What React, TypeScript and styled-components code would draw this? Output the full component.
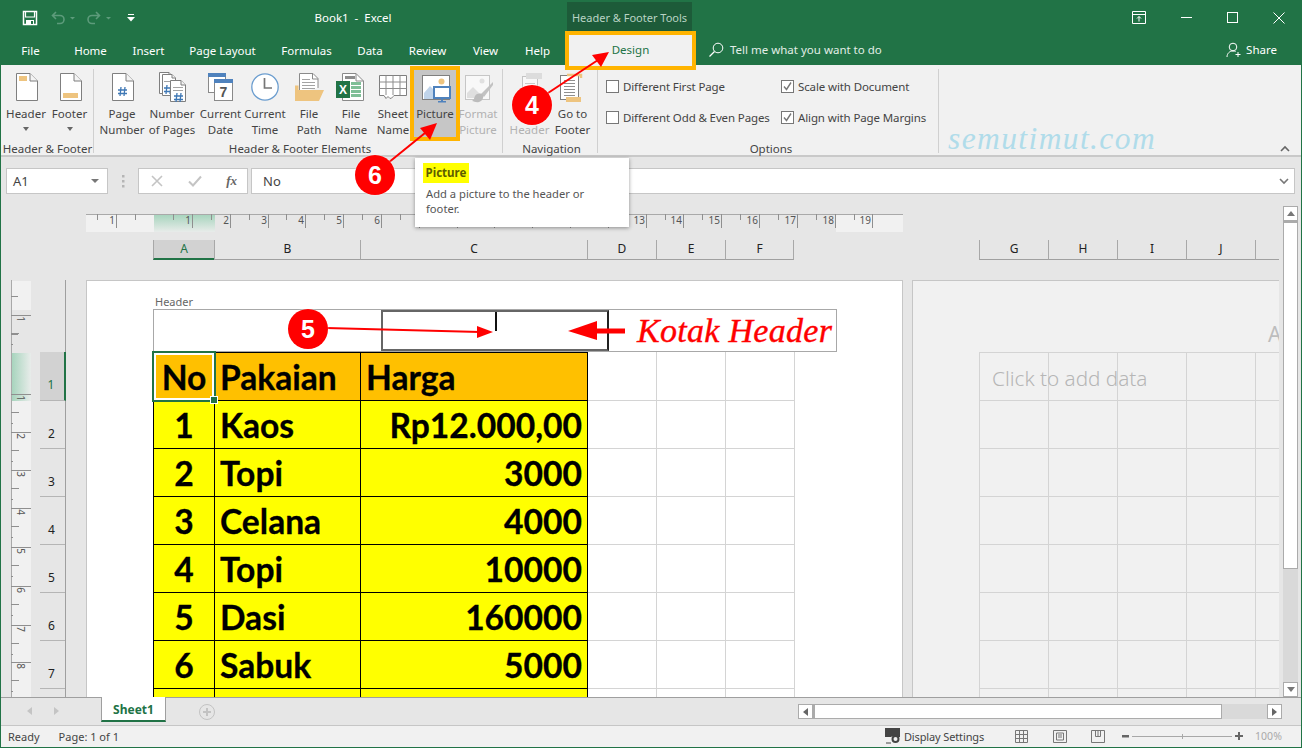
import React from "react";
import styled, { createGlobalStyle } from "styled-components";

const GREEN = "#217346";
const UI = `"Noto Sans", "Open Sans", sans-serif`;

const Global = createGlobalStyle`
  html, body { margin: 0; padding: 0; background: #e6e6e6; }
  * { box-sizing: border-box; }
`;

const Frame = styled.div`
  position: relative; width: 1302px; height: 748px; overflow: hidden;
  display: flex; flex-direction: column; background: #e6e6e6;
  border: 1px solid ${GREEN}; border-top: 0;
  font-family: ${UI}; font-size: 11.5px; color: #444;
`;

/* Title bar */
const TitleBar = styled.div`
  height: 35px; flex: none; display: flex; align-items: center; background: ${GREEN}; color: #fff;
`;
const Qat = styled.div`
  width: 250px; display: flex; align-items: center; padding-left: 21px;
`;
const QatSlot = styled.span<{ $w: number }>`
  display: flex; width: ${(p) => p.$w}px;
`;
const DocTitle = styled.div`
  width: 196px; text-align: center; white-space: pre; font-size: 11.5px; padding: 0 0 1px 8px;
`;
const ToolTab = styled.div`
  align-self: flex-start; margin: 2px 0 0 120px; width: 125px; height: 33px; background: #1d5b39;
  color: #b9d3c4; text-align: center; line-height: 32px; font-size: 11px;
`;
const WinControls = styled.div`
  margin-left: auto; display: flex; align-items: center; width: 169px; padding-right: 16px;
  justify-content: space-between;
`;

/* Tabs */
const TabBar = styled.div`
  height: 30px; flex: none; display: flex; align-items: center; background: ${GREEN}; color: #fff;
`;
const Tab = styled.div<{ $w: number }>`
  width: ${(p) => p.$w}px; text-align: center; line-height: 29px; white-space: nowrap;
`;
const DesignTab = styled.div`
  margin-left: 5px; width: 125px; height: 30px; line-height: 29px; background: #f1f1f1;
  color: ${GREEN}; text-align: center;
`;
const TellMe = styled.div`
  margin-left: 15px; display: flex; align-items: center; gap: 6px; color: #e2eee7; padding-bottom: 1px;
`;
const ShareBox = styled.div`
  margin-left: auto; margin-right: 24px; display: flex; align-items: center; gap: 4px; padding-bottom: 1px;
`;

/* Ribbon */
const Ribbon = styled.div`
  height: 92px; flex: none; display: flex; background: #f1f1f1; border-bottom: 2px solid #c9c9c9;
`;
const Group = styled.div<{ $w: number; $pad: number }>`
  width: ${(p) => p.$w}px; height: 84px; flex: none; padding-left: ${(p) => p.$pad}px;
  display: flex; flex-direction: column; margin-top: 4px;
  border-right: 1px solid #d0d0d0;
`;
const Buttons = styled.div`
  height: 69px; flex: none; display: flex;
`;
const GroupLabel = styled.div`
  margin-top: 4px; height: 14px; flex: none; line-height: 14px; text-align: center; font-size: 11.5px;
  margin-left: -2px; white-space: nowrap; color: #444;
`;
const RibbonBtn = styled.div<{ $w: number; $on?: boolean; $dim?: boolean }>`
  width: ${(p) => p.$w}px; flex: none; display: flex; flex-direction: column; align-items: center;
  padding-top: 3px; background: ${(p) => (p.$on ? "#c6c6c6" : "transparent")};
  color: ${(p) => (p.$dim ? "#b1b1b1" : "#444")};
  svg { flex: none; }
`;
const BtnText = styled.div`
  margin-top: 2px; text-align: center; line-height: 16px; white-space: pre; font-size: 11.5px;
`;
const Caret = styled.div`
  margin-top: 5px; width: 0; height: 0; border: 3px solid transparent; border-top: 4px solid #666; border-bottom: 0;
`;
const OptGrid = styled.div`
  display: grid; grid-template-columns: 175px 1fr; grid-auto-rows: 31px; padding-top: 2px; height: 69px; flex: none;
`;
const Opt = styled.div`
  display: flex; align-items: center; gap: 4px; white-space: nowrap; font-size: 11.5px; letter-spacing: -0.12px;
`;
const Box = styled.span`
  width: 13px; height: 13px; background: #fff; border: 1px solid #777; flex: none; display: flex;
`;
const Brand = styled.div`
  flex: 1; padding: 56px 0 0 9px; font: italic 31.5px "Liberation Serif", serif; letter-spacing: 1.4px; color: #b0dcea;
  white-space: nowrap; line-height: 36px;
`;
const Collapse = styled.div`
  align-self: flex-end; margin: 0 11px 3px 0; display: flex;
`;

/* Formula row */
const FormulaRow = styled.div`
  height: 48px; flex: none; display: flex; align-items: flex-start; padding: 11px 6px 0 5px;
`;
const NameBox = styled.div`
  width: 102px; height: 26px; background: #fff; border: 1px solid #c6c6c6; display: flex; align-items: center;
  justify-content: space-between; padding: 0 8px 0 6px; font-size: 13px; color: #444;
`;
const DownTri = styled.span`
  width: 0; height: 0; border: 4px solid transparent; border-top: 4px solid #777; border-bottom: 0; border-left-width: 4px;
`;
const Grip = styled.div`
  width: 30px; height: 26px; display: flex; align-items: center; justify-content: center; color: #aaa;
`;
const FxBox = styled.div`
  width: 110px; height: 26px; background: #fff; border: 1px solid #c6c6c6; display: flex; align-items: center;
  justify-content: space-between; padding: 0 10px 0 12px;
`;
const FxText = styled.span`
  font: italic bold 13px "Liberation Serif", serif; color: #666;
`;
const FormulaInput = styled.div`
  margin-left: 3px; flex: 1; height: 26px; background: #fff; border: 1px solid #c6c6c6; display: flex;
  align-items: center; justify-content: space-between; padding: 0 5px 0 11px; font-size: 13px; color: #444;
`;

/* Worksheet */
const Workspace = styled.div`
  flex: none; height: 493px; display: flex; border-bottom: 1px solid #9f9f9f;
`;
const SheetPane = styled.div`
  width: 1278px; flex: none; overflow: hidden; position: relative; padding-top: 9px;
`;
const RulerRow = styled.div`
  margin-left: 85px; height: 18px; display: flex;
`;
const ColRow = styled.div`
  margin: 8px 0 0 152px; height: 20px; display: flex; width: 1126px;
`;
const ColGroup = styled.div<{ $mr?: number }>`
  display: flex; flex: none; margin-right: ${(p) => p.$mr ?? 0}px;
`;
const ColHead = styled.div<{ $w: number; $sel?: boolean }>`
  width: ${(p) => p.$w}px; flex: none; height: 20px; text-align: center; line-height: 18px; font-size: 12px; color: ${(p) => (p.$sel ? GREEN : "#222")};
  background: ${(p) => (p.$sel ? "#d2d2d2" : "transparent")};
  border-bottom: ${(p) => (p.$sel ? `2px solid ${GREEN}` : "1px solid #a0a0a0")};
  border-left: 1px solid #a8a8a8;
  &:last-child { border-right: 1px solid #a8a8a8; }
`;
const BodyRow = styled.div`
  margin-top: 20px; display: flex; height: 418px;
`;
const VRulerSlot = styled.div`
  margin-left: 10px; width: 20px; flex: none; display: flex;
`;
const RowHeads = styled.div`
  margin-left: 9px; width: 26px; flex: none; padding-top: 72px; border-right: 1px solid #9f9f9f;
`;
const RowHead = styled.div<{ $sel?: boolean }>`
  height: ${(p) => (p.$sel ? 49 : 48)}px; text-align: center; padding-top: 24px; line-height: 18px; padding-right: 2px; font-size: 12px; color: ${(p) => (p.$sel ? GREEN : "#222")};
  border-bottom: 1px solid #b5b5b5;
  background: ${(p) => (p.$sel ? "#d2d2d2" : "transparent")};
  margin-right: ${(p) => (p.$sel ? "-1px" : 0)};
  border-right: ${(p) => (p.$sel ? `2px solid ${GREEN}` : 0)};
`;
const Page = styled.div<{ $gray?: boolean; $w: number; $ml: number }>`
  flex: none; width: ${(p) => p.$w}px; margin-left: ${(p) => p.$ml}px; height: 418px; background: ${(p) => (p.$gray ? "#f1f1f1" : "#fff")};
  border: 1px solid #c6c6c6; border-bottom: 0; overflow: hidden; position: relative;
`;
const HeaderTag = styled.div`
  margin: 14px 0 0 68px; height: 14px; line-height: 14px; font-size: 11px; color: #666;
`;
const HeaderBox = styled.div`
  margin-left: 66px; width: 684px; height: 43px; display: flex; border: 1px solid #a8a8a8;
`;
const HeadSection = styled.div<{ $w: number }>`
  width: ${(p) => p.$w}px; flex: none;
`;
const HeadCenter = styled.div`
  width: 228px; flex: none; height: 41px; border: 2px solid #666; border-right-color: #222; padding-left: 112px;
`;
const Cursor = styled.div`
  width: 1.5px; height: 19px; background: #111;
`;
const KotakText = styled.div`
  padding: 0 0 0 28px; font: italic 34px "Liberation Serif", serif; line-height: 41px; color: #f00; white-space: nowrap;
  letter-spacing: 0.3px; -webkit-text-stroke: 0.4px #f00;
`;
const TableGrid = styled.div`
  margin-left: 66px; display: grid; grid-template-columns: 62px 146px 227px 69px 69px 69px;
  grid-template-rows: 49px; grid-auto-rows: 48px;
  font: bold 33.6px Lato, "Noto Sans", sans-serif; -webkit-text-stroke: 0.3px #000; color: #000; width: max-content;
`;
const Cell = styled.div<{ $bg?: string; $align?: string; $line?: string; $top?: boolean; $left?: boolean }>`
  background: ${(p) => p.$bg ?? "transparent"};
  text-align: ${(p) => p.$align ?? "left"};
  padding: 0 5px 0 5px; line-height: 48px; white-space: nowrap; overflow: hidden;
  border-right: 1px solid ${(p) => p.$line ?? "#000"};
  border-bottom: 1px solid ${(p) => p.$line ?? "#000"};
  border-top: ${(p) => (p.$top ? "1px solid #000" : 0)};
  border-left: ${(p) => (p.$left ? "1px solid #000" : 0)};
`;
const FirstCell = styled(Cell)`
  outline: 2px solid ${GREEN}; outline-offset: -1px; box-shadow: inset 0 0 0 2px #fff; position: relative; z-index: 1; padding: 0;
  overflow: visible; border-color: transparent;
  &:after { content: ""; position: absolute; right: -4px; bottom: -4px; width: 6px; height: 6px; background: ${GREEN}; border: 1px solid #fff; }
`;
const Grid2 = styled.div`
  margin: 0 0 0 66px; display: grid; grid-template-columns: repeat(5, 69px); grid-auto-rows: 48px; position: relative;
  border-top: 1px solid #d4d4d4; border-left: 1px solid #d4d4d4; width: max-content;
`;
const Cell2 = styled.div`
  border-right: 1px solid #d4d4d4; border-bottom: 1px solid #d4d4d4;
`;
const AddHeader = styled.div`
  margin: 36px 0 0 355px; height: 35px; font-size: 21px; color: #bdbdbd; line-height: 34px; white-space: nowrap;
`;
const AddData = styled.div`
  position: absolute; left: 12px; top: 11px; font-size: 20.7px; font-weight: 300; color: #b6b6b6; line-height: 28px; white-space: nowrap;
`;

/* Vertical scrollbar */
const VScroll = styled.div`
  margin: 1px 0 0 4px; width: 15px; display: flex; flex-direction: column; background: #d9d9d9;
`;
const ScrollBtn = styled.div`
  flex: none; height: 15px; width: 15px; background: #fff; border: 1px solid #ababab; display: flex; align-items: center; justify-content: center;
`;
const VThumb = styled.div`
  height: 348px; flex: none; background: #fff; border: 1px solid #ababab; border-top-width: 2px;
`;
const VTrack = styled.div`
  flex: 1;
`;

/* Sheet tabs */
const SheetBar = styled.div`
  height: 28px; flex: none; display: flex; align-items: flex-start; border-bottom: 1px solid #c6c6c6;
`;
const SheetNav = styled.div`
  width: 100px; display: flex; padding: 9px 0 0 26px; gap: 22px; flex: none; height: 25px;
`;
const SheetTab = styled.div`
  margin-top: -1px; width: 65px; height: 25px; flex: none; background: #fff; border: 1px solid #9f9f9f; border-top: 0;
  border-bottom: 2px solid ${GREEN}; color: ${GREEN}; font-weight: 700; font-size: 12px; line-height: 26px; text-align: center;
`;
const AddSheet = styled.div`
  margin: 6px 0 0 33px; width: 16px; height: 16px; border: 1.5px solid #c3c3c3; border-radius: 50%; display: flex; align-items: center; justify-content: center; flex: none;
`;
const HScroll = styled.div`
  margin: 6px 19px 0 auto; width: 484px; height: 15px; display: flex; background: #d9d9d9;
`;
const HBtn = styled.div<{ $gap?: boolean }>`
  width: 15px; height: 15px; flex: none; background: #fff; border: 1px solid #ababab; display: flex; align-items: center; justify-content: center;
  margin-left: ${(p) => (p.$gap ? "auto" : 0)};
`;
const HThumb = styled.div`
  width: 409px; height: 15px; background: #fff; border: 1px solid #ababab; border-left-width: 2px;
`;

/* Status */
const StatusBar = styled.div`
  height: 21px; flex: none; display: flex; align-items: center; background: #f1f1f1; padding: 0 0 1px 7px; font-size: 11px; color: #444;
`;
const StatusItem = styled.span<{ $ml?: number }>`
  margin-left: ${(p) => p.$ml ?? 0}px; display: flex; align-items: center; gap: 3px; white-space: nowrap; flex: none;
`;
const DisplayLabel = styled.span`
  letter-spacing: -0.13px;
`;
const ZoomTrack = styled.div`
  width: 100px; height: 1px; background: #a8a8a8; position: relative; flex: none;
  &:after { content: ""; position: absolute; left: 50px; top: -2px; width: 1px; height: 5px; background: #a8a8a8; }
`;
const ZoomPct = styled.span`
  margin-left: 12px; color: #aaa; font-size: 10.5px;
`;

/* Overlays */
const Overlay = styled.svg`
  position: absolute; left: -1px; top: 0; pointer-events: none; z-index: 5;
`;
const Bubble = styled.div<{ $x: number; $y: number; $r?: number }>`
  position: absolute; z-index: 6; left: ${(p) => p.$x - (p.$r ?? 20) - 1}px; top: ${(p) => p.$y - (p.$r ?? 20)}px;
  width: ${(p) => (p.$r ?? 20) * 2}px; height: ${(p) => (p.$r ?? 20) * 2}px; border-radius: 50%; background: #f00; color: #fff;
  font: bold 25px "Liberation Sans", sans-serif; text-align: center; line-height: ${(p) => (p.$r ?? 20) * 2}px;
  box-shadow: 0 0 2px rgba(255,255,255,.8);
`;
const Highlight = styled.div<{ $x: number; $y: number; $w: number; $h: number }>`
  position: absolute; z-index: 4; left: ${(p) => p.$x - 1}px; top: ${(p) => p.$y}px; width: ${(p) => p.$w}px; height: ${(p) => p.$h}px;
  border: 4px solid #ffb400; pointer-events: none;
`;
const Tip = styled.div`
  position: absolute; z-index: 4; left: 414px; top: 158px; width: 214px; height: 69px; background: #fff;
  box-shadow: 0 1px 4px rgba(0,0,0,.4); padding: 5px 8px; font-size: 11.2px; color: #555;
`;
const TipTitle = styled.div`
  width: 46px; height: 20px; background: #ff0; font-weight: 700; color: #5d5d00; line-height: 19px; font-size: 11.5px; text-align: center; white-space: nowrap;
`;
const TipBody = styled.div`
  margin-top: 3px; padding-left: 3px; line-height: 15px; width: 175px;
`;

/* Icons */
const Doc = ({ x = 6, y = 1, w = 22, h = 28, f = 8, c = "#7f7f7f", fill = "#fff" }: any) => (
  <>
    <path d={`M${x + 0.5} ${y + 0.5}H${x + w - f}L${x + w - 0.5} ${y + f}V${y + h - 0.5}H${x + 0.5}Z`} fill={fill} stroke={c} />
    <path d={`M${x + w - f} ${y + 0.5}V${y + f}H${x + w - 0.5}`} fill="#f4f4f4" stroke={c} />
  </>
);
const Ico = ({ children, w = 32, h = 32 }: any) => (
  <svg width={w} height={h} viewBox={`0 0 ${w} ${h}`} aria-hidden="true">{children}</svg>
);
const Hash = ({ x, y, s = 1 }: any) => (
  <path transform={`translate(${x} ${y}) scale(${s})`} d="M3 0 2 9M7 0 6 9M0 3H9M0 6.5H9" stroke="#3f78b5" strokeWidth="1.3" fill="none" />
);
const Lines = ({ x, y, w, n, gap = 3, c = "#a3a3a3" }: any) => (
  <path d={Array.from({ length: n }, (_, i) => `M${x} ${y + i * gap + 0.5}h${w}`).join("")} stroke={c} fill="none" />
);

const HeaderIco = () => <Ico><Doc /><rect x="9" y="4" width="8" height="5" fill="#eec47f" /></Ico>;
const FooterIco = () => <Ico><Doc /><rect x="9" y="21" width="15" height="5" fill="#eec47f" /></Ico>;
const PageNumIco = () => <Ico><Doc /><Hash x={12} y={15} /></Ico>;
const NumPagesIco = () => (
  <Ico>
    <Doc x={3} y={0} w={14} h={22} f={4} />
    <Doc x={6} y={2} w={14} h={22} f={4} />
    <Lines x={8} y={9} w={9} n={1} />
    <Hash x={8} y={13} />
    <Doc x={14} y={8} w={16} h={22} f={5} />
    <Lines x={17} y={15} w={10} n={2} />
    <Hash x={18} y={21} />
  </Ico>
);
const DateIco = () => (
  <Ico>
    <rect x="3.5" y="1.5" width="17" height="19" fill="#fff" stroke="#8a8a8a" />
    <rect x="3" y="1" width="18" height="4" fill="#4f82bd" />
    <rect x="9.5" y="7.5" width="18" height="21" fill="#fff" stroke="#8a8a8a" />
    <rect x="9" y="7" width="19" height="4" fill="#4f82bd" />
    <text x="18.5" y="25" textAnchor="middle" fontFamily="Liberation Sans" fontWeight="700" fontSize="14" fill="#555">7</text>
  </Ico>
);
const TimeIco = () => (
  <Ico>
    <circle cx="16" cy="15" r="13.2" fill="#fff" stroke="#6b9dcf" strokeWidth="1.3" />
    <path d="M15.5 6V16H23" fill="none" stroke="#767676" strokeWidth="1.7" />
  </Ico>
);
const PathIco = () => (
  <Ico>
    <path d="M6.5 20V1.5H20L25 6.5V16" fill="#fff" stroke="#8a8a8a" />
    <path d="M19.5 1.5V7H25" fill="none" stroke="#8a8a8a" />
    <Lines x={9} y={7} w={8} n={1} />
    <Lines x={9} y={10} w={13} n={3} />
    <path d="M2 13.5H5.5V18H31L26 29H2Z" fill="#eec47f" />
  </Ico>
);
const NameIco = () => (
  <Ico>
    <path d="M7.5 1.5H21L28.5 9V28.5H7.5Z" fill="#fff" stroke="#8a8a8a" />
    <path d="M21 1.5V9H28.5" fill="none" stroke="#8a8a8a" />
    <rect x="10" y="4" width="10" height="3" fill="#8d8d8d" />
    <path d="M16 10h10v3h-10zM16 14h10v3h-10zM16 18h10v3h-10zM16 22h10v3h-10z" fill="#7fbf97" />
    <rect x="1" y="9" width="14" height="17" fill={GREEN} />
    <text x="8" y="22" textAnchor="middle" fontFamily="Liberation Sans" fontWeight="700" fontSize="12" fill="#fff">X</text>
  </Ico>
);
const SheetIco = () => (
  <Ico>
    <path d="M2.5 3.5H29.5V23.5H17C16 25 15 26 13 26.5L11 24.5L9 26.5L7 23.5H2.5Z" fill="#fff" stroke="#7f7f7f" />
    <path d="M2.5 10H29.5M2.5 16.5H29.5M9 3.5V23M16 3.5V23M23 3.5V23" stroke="#8d8d8d" fill="none" />
  </Ico>
);
const PictureIco = () => (
  <Ico>
    <rect x="3.5" y="3.5" width="27" height="24" fill="#fff" stroke="#7f7f7f" />
    <circle cx="22.5" cy="9.5" r="3" fill="#eec47f" />
    <path d="M5 27V21L11 14L20 23V27Z" fill="#c0d4ea" />
    <rect x="15" y="15" width="16" height="11" fill="#fff" stroke="#4f82bd" strokeWidth="2" />
    <path d="M22 27h2v2h3v1.4h-8V29h3z" fill="#4f82bd" />
  </Ico>
);
const FormatPicIco = () => (
  <Ico>
    <rect x="3.5" y="3.5" width="24" height="24" fill="#f8f8f8" stroke="#c6c6c6" />
    <circle cx="20" cy="9" r="2.5" fill="#e0e0e0" />
    <path d="M5 26V21L11 15L19 23V26Z" fill="#dfdfdf" />
    <path d="M31 10 19 22l3 3 9-12z" fill="#c2c2c2" />
    <path d="M13 24c2-3 6-3 8-1 1 3-1 6-4 7-3 1-5-1-7-1 2-1 2-3 3-5z" fill="#bcbcbc" />
  </Ico>
);
const NavHeaderIco = () => (
  <Ico>
    <rect x="8.5" y="4.5" width="15" height="24" fill="#f8f8f8" stroke="#c4c4c4" />
    <rect x="12" y="1" width="16" height="6" fill="#dcdcdc" />
    <Lines x={11} y={11} w={10} n={5} gap={3} c="#c9c9c9" />
  </Ico>
);
const NavFooterIco = () => (
  <Ico>
    <rect x="3.5" y="3.5" width="18" height="24" fill="#fff" stroke="#7f7f7f" />
    <path d="M10 3h14v3" fill="none" stroke="#eec47f" strokeWidth="2.4" />
    <Lines x={7} y={8} w={11} n={6} gap={3} c="#8f8f8f" />
    <rect x="9" y="25" width="15" height="5" fill="#eec47f" />
  </Ico>
);
const Check = () => (
  <svg width="11" height="11" viewBox="0 0 11 11"><path d="M2 5.5 4.5 8.5 9 1.5" fill="none" stroke="#777" strokeWidth="1.4" /></svg>
);

const Ruler = () => {
  const step = 37.8;
  const ticks: React.ReactNode[] = [];
  const major = (x: number, label: number | null, key: string) => (
    <g key={key}>
      <path d={`M${x + 0.5} 0V14`} stroke="#8f8f8f" />
      {label !== null && <text x={x - 1} y={10} fontSize="10" textAnchor="end" fill="#555" fontFamily="Noto Sans">{label}</text>}
    </g>
  );
  ticks.push(major(30, 1, "l"));
  for (let n = 1; n <= 19; n++) {
    const x = 106 + (n - 1) * step;
    /* numbers 7 to 12 lie behind the tooltip */
    ticks.push(major(Math.round(x), n >= 7 && n <= 12 ? null : n, `m${n}`));
    ticks.push(<path key={`h${n}`} d={`M${Math.round(x - step / 2) + 0.5} 0V6`} stroke="#8f8f8f" />);
  }
  return (
    <svg width="817" height="18" viewBox="0 0 817 18" aria-hidden="true">
      <defs>
        <linearGradient id="rg" x1="0" y1="0" x2="0" y2="1">
          <stop offset="0" stopColor="#a4d3bb" />
          <stop offset="1" stopColor="#e8ecea" />
        </linearGradient>
      </defs>
      <rect x="0" y="0" width="68" height="18" fill="#f1f1f1" />
      <rect x="68" y="0" width="61" height="18" fill="url(#rg)" />
      <rect x="750" y="0" width="67" height="18" fill="#f1f1f1" />
      <path d="M0 .5H817" stroke="#a9a9a9" />
      <path d="M11.5 0V6M49.5 0V6" stroke="#8f8f8f" />
      {ticks}
    </svg>
  );
};

const VRuler = () => {
  const marks: [number, number][] = [[35, 1], [113.5, 1], [152, 2], [190, 3], [228, 4], [267, 5], [306, 6], [345, 7], [382, 8]];
  return (
    <svg width="20" height="418" viewBox="0 0 20 418" aria-hidden="true">
      <defs>
        <linearGradient id="vg" x1="0" y1="0" x2="1" y2="0">
          <stop offset="0" stopColor="#a4d3bb" />
          <stop offset="1" stopColor="#e8ecea" />
        </linearGradient>
      </defs>
      <rect x="0" y="1" width="20" height="29" fill="#f1f1f1" />
      <rect x="0" y="73" width="20" height="48" fill="url(#vg)" />
      <rect x="0" y="121" width="20" height="297" fill="#f1f1f1" />
      <path d="M.5 0V418" stroke="#a9a9a9" />
      <path d="M0 16.5H7M0 54.5H7" stroke="#8f8f8f" />
      {marks.map(([y, n]) => {
        const ry = Math.round(y);
        return (
          <g key={`${y}`}>
            <path d={`M0 ${ry + 0.5}H20`} stroke="#8f8f8f" />
            <path d={`M0 ${ry + 18.5}H8M0 ${ry + 29.5}H2`} stroke="#8f8f8f" />
            <text transform={`translate(6 ${ry + 4}) rotate(90)`} fontSize="10" textAnchor="middle" fill="#555" fontFamily="Noto Sans">{n}</text>
          </g>
        );
      })}
    </svg>
  );
};

const rows: [string, string, string][] = [
  ["1", "Kaos", "Rp12.000,00"],
  ["2", "Topi", "3000"],
  ["3", "Celana", "4000"],
  ["4", "Topi", "10000"],
  ["5", "Dasi", "160000"],
  ["6", "Sabuk", "5000"],
  ["", "", ""],
];
const HEAD = "#ffc000";
const YEL = "#ffff00";

export default function App() {
  return (
    <Frame>
      <Global />
      <TitleBar>
        <Qat>
          <QatSlot $w={29}>
            <svg width="16" height="16" viewBox="0 0 16 16"><path d="M1.5 1.5H14.5V14.5H1.5Z" fill="none" stroke="#fff" strokeWidth="1.5" /><path d="M3.5 1.5H12.5V7H3.5Z" fill="none" stroke="#fff" strokeWidth="1.2" /><rect x="4" y="10" width="8" height="4.5" fill="#fff" /><rect x="9" y="11" width="2" height="3" fill={GREEN} /></svg>
          </QatSlot>
          <QatSlot $w={35}>
            <svg width="28" height="14" viewBox="0 0 28 14"><path d="M2 4.5H9a4 4 0 0 1 0 8H6M5 1 1.5 4.5 5 8" fill="none" stroke="#5d9b7b" strokeWidth="1.6" /><path d="M19 6h5l-2.5 2.5z" fill="#5d9b7b" /></svg>
          </QatSlot>
          <QatSlot $w={41}>
            <svg width="28" height="14" viewBox="0 0 28 14"><path d="M13 4.5H6a4 4 0 0 0 0 8H9M10 1l3.5 3.5L10 8" fill="none" stroke="#5d9b7b" strokeWidth="1.6" /><path d="M20 6h5l-2.5 2.5z" fill="#5d9b7b" /></svg>
          </QatSlot>
          <QatSlot $w={10}>
            <svg width="8" height="9" viewBox="0 0 8 9"><path d="M1 1.5H7" stroke="#fff" /><path d="M0 4h8L4 8.5z" fill="#fff" /></svg>
          </QatSlot>
        </Qat>
        <DocTitle>Book1  -  Excel</DocTitle>
        <ToolTab>Header &amp; Footer Tools</ToolTab>
        <WinControls>
          <svg width="14" height="13" viewBox="0 0 14 13"><path d="M.5.5h13v12H.5zM.5 3.5h13" fill="none" stroke="#fff" /><path d="M7 10.5V5.5M5 7.5l2-2 2 2" fill="none" stroke="#fff" /></svg>
          <svg width="11" height="11" viewBox="0 0 11 11"><path d="M0 5.5H11" stroke="#fff" /></svg>
          <svg width="11" height="11" viewBox="0 0 11 11"><rect x=".5" y=".5" width="10" height="10" fill="none" stroke="#fff" /></svg>
          <svg width="12" height="12" viewBox="0 0 12 12"><path d="M.5.5 11.5 11.5M11.5.5.5 11.5" stroke="#fff" /></svg>
        </WinControls>
      </TitleBar>
      <TabBar>
        <Tab $w={59}>File</Tab>
        <Tab $w={61}>Home</Tab>
        <Tab $w={55}>Insert</Tab>
        <Tab $w={93}>Page Layout</Tab>
        <Tab $w={75}>Formulas</Tab>
        <Tab $w={52}>Data</Tab>
        <Tab $w={63}>Review</Tab>
        <Tab $w={53}>View</Tab>
        <Tab $w={51}>Help</Tab>
        <DesignTab>Design</DesignTab>
        <TellMe>
          <svg width="16" height="16" viewBox="0 0 16 16"><circle cx="10" cy="6" r="4.8" fill="none" stroke="#fff" /><path d="M6.5 9.5 1.5 14.5" stroke="#fff" strokeWidth="1.2" /></svg>
          Tell me what you want to do
        </TellMe>
        <ShareBox>
          <svg width="16" height="16" viewBox="0 0 16 16"><circle cx="7" cy="5" r="3.8" fill="none" stroke="#fff" /><path d="M1 15c0-3.5 2.5-6 6-6 1 0 2 .2 2.600.6M12 10v5M9.500 12.500h5" fill="none" stroke="#fff" /></svg>
          Share
        </ShareBox>
      </TabBar>
      <Ribbon>
        <Group $w={93} $pad={3}>
          <Buttons>
            <RibbonBtn $w={44}><HeaderIco /><BtnText>Header</BtnText><Caret /></RibbonBtn>
            <RibbonBtn $w={43}><FooterIco /><BtnText>Footer</BtnText><Caret /></RibbonBtn>
          </Buttons>
          <GroupLabel>Header &amp; Footer</GroupLabel>
        </Group>
        <Group $w={409} $pad={6}>
          <Buttons>
            <RibbonBtn $w={44}><PageNumIco /><BtnText>{"Page\nNumber"}</BtnText></RibbonBtn>
            <RibbonBtn $w={56}><NumPagesIco /><BtnText>{"Number\nof Pages"}</BtnText></RibbonBtn>
            <RibbonBtn $w={41}><DateIco /><BtnText>{"Current\nDate"}</BtnText></RibbonBtn>
            <RibbonBtn $w={48}><TimeIco /><BtnText>{"Current\nTime"}</BtnText></RibbonBtn>
            <RibbonBtn $w={40}><PathIco /><BtnText>{"File\nPath"}</BtnText></RibbonBtn>
            <RibbonBtn $w={44}><NameIco /><BtnText>{"File\nName"}</BtnText></RibbonBtn>
            <RibbonBtn $w={40}><SheetIco /><BtnText>{"Sheet\nName"}</BtnText></RibbonBtn>
            <RibbonBtn $w={44} $on><PictureIco /><BtnText>Picture</BtnText></RibbonBtn>
            <RibbonBtn $w={42} $dim><FormatPicIco /><BtnText>{"Format\nPicture"}</BtnText></RibbonBtn>
          </Buttons>
          <GroupLabel>Header &amp; Footer Elements</GroupLabel>
        </Group>
        <Group $w={95} $pad={5}>
          <Buttons>
            <RibbonBtn $w={43} $dim><NavHeaderIco /><BtnText>{"\nHeader"}</BtnText></RibbonBtn>
            <RibbonBtn $w={43}><NavFooterIco /><BtnText>{"Go to\nFooter"}</BtnText></RibbonBtn>
          </Buttons>
          <GroupLabel>Navigation</GroupLabel>
        </Group>
        <Group $w={341} $pad={8}>
          <OptGrid>
            <Opt><Box />Different First Page</Opt>
            <Opt><Box><Check /></Box>Scale with Document</Opt>
            <Opt><Box />Different Odd &amp; Even Pages</Opt>
            <Opt><Box><Check /></Box>Align with Page Margins</Opt>
          </OptGrid>
          <GroupLabel>Options</GroupLabel>
        </Group>
        <Brand>semutimut.com</Brand>
        <Collapse>
          <svg width="10" height="7" viewBox="0 0 10 7"><path d="M1 6 5 2l4 4" fill="none" stroke="#666" strokeWidth="1.6" /></svg>
        </Collapse>
      </Ribbon>
      <FormulaRow>
        <NameBox>A1<DownTri /></NameBox>
        <Grip>
          <svg width="3" height="13" viewBox="0 0 3 13"><path d="M0 0h2.500v2.500H0zM0 5h2.500v2.500H0zM0 10h2.500v2.500H0z" fill="#b5b5b5" /></svg>
        </Grip>
        <FxBox>
          <svg width="12" height="12" viewBox="0 0 12 12"><path d="M1 1 11 11M11 1 1 11" stroke="#c4c4c4" strokeWidth="1.6" /></svg>
          <svg width="14" height="12" viewBox="0 0 14 12"><path d="M1 6.500 5 10.500 13 1.500" fill="none" stroke="#c4c4c4" strokeWidth="2" /></svg>
          <FxText>fx</FxText>
        </FxBox>
        <FormulaInput>
          No
          <svg width="10" height="7" viewBox="0 0 10 7"><path d="M1 1 5 5l4-4" fill="none" stroke="#777" strokeWidth="1.6" /></svg>
        </FormulaInput>
      </FormulaRow>
      <Workspace>
        <SheetPane>
          <RulerRow><Ruler /></RulerRow>
          <ColRow>
            <ColGroup $mr={185}>
              <ColHead $w={61} $sel>A</ColHead>
              <ColHead $w={146}>B</ColHead>
              <ColHead $w={227}>C</ColHead>
              <ColHead $w={69}>D</ColHead>
              <ColHead $w={69}>E</ColHead>
              <ColHead $w={69}>F</ColHead>
            </ColGroup>
            <ColGroup>
              <ColHead $w={69}>G</ColHead>
              <ColHead $w={69}>H</ColHead>
              <ColHead $w={69}>I</ColHead>
              <ColHead $w={69}>J</ColHead>
              <ColHead $w={69} />
            </ColGroup>
          </ColRow>
          <BodyRow>
            <VRulerSlot><VRuler /></VRulerSlot>
            <RowHeads>
              <RowHead $sel>1</RowHead>
              {[2, 3, 4, 5, 6, 7].map((n) => <RowHead key={n}>{n}</RowHead>)}
            </RowHeads>
            <Page $w={817} $ml={20}>
              <HeaderTag>Header</HeaderTag>
              <HeaderBox>
                <HeadSection $w={227} />
                <HeadCenter><Cursor /></HeadCenter>
                <HeadSection $w={227}><KotakText>Kotak Header</KotakText></HeadSection>
              </HeaderBox>
              <TableGrid>
                <FirstCell $bg={HEAD} $align="center" $top $left>No</FirstCell>
                <Cell $bg={HEAD} $top>Pakaian</Cell>
                <Cell $bg={HEAD} $top>Harga</Cell>
                <Cell $line="#d4d4d4" /><Cell $line="#d4d4d4" /><Cell $line="#d4d4d4" />
                {rows.map((r, i) => (
                  <React.Fragment key={i}>
                    <Cell $bg={YEL} $align="center" $left>{r[0]}</Cell>
                    <Cell $bg={YEL}>{r[1]}</Cell>
                    <Cell $bg={YEL} $align="right">{r[2]}</Cell>
                    <Cell $line="#d4d4d4" /><Cell $line="#d4d4d4" /><Cell $line="#d4d4d4" />
                  </React.Fragment>
                ))}
              </TableGrid>
            </Page>
            <Page $w={400} $ml={9} $gray>
              <AddHeader>A</AddHeader>
              <Grid2>
                {Array.from({ length: 40 }, (_, i) => <Cell2 key={i} />)}
                <AddData>Click to add data</AddData>
              </Grid2>
            </Page>
          </BodyRow>
        </SheetPane>
        <VScroll>
          <ScrollBtn><svg width="8" height="5" viewBox="0 0 8 5"><path d="M4 0 8 5H0z" fill="#777" /></svg></ScrollBtn>
          <VThumb />
          <VTrack />
          <ScrollBtn><svg width="8" height="5" viewBox="0 0 8 5"><path d="M4 5 8 0H0z" fill="#777" /></svg></ScrollBtn>
        </VScroll>
      </Workspace>
      <SheetBar>
        <SheetNav>
          <svg width="5" height="8" viewBox="0 0 5 8"><path d="M5 0V8L0 4z" fill="#c4c4c4" /></svg>
          <svg width="5" height="8" viewBox="0 0 5 8"><path d="M0 0V8L5 4z" fill="#c4c4c4" /></svg>
        </SheetNav>
        <SheetTab>Sheet1</SheetTab>
        <AddSheet>
          <svg width="10" height="10" viewBox="0 0 10 10"><path d="M5 1V9M1 5H9" stroke="#c3c3c3" strokeWidth="2" /></svg>
        </AddSheet>
        <HScroll>
          <HBtn><svg width="5" height="8" viewBox="0 0 5 8"><path d="M5 0V8L0 4z" fill="#666" /></svg></HBtn>
          <HThumb />
          <HBtn $gap><svg width="5" height="8" viewBox="0 0 5 8"><path d="M0 0V8L5 4z" fill="#666" /></svg></HBtn>
        </HScroll>
      </SheetBar>
      <StatusBar>
        <StatusItem>Ready</StatusItem>
        <StatusItem $ml={19}>Page: 1 of 1</StatusItem>
        <StatusItem $ml={766}>
          <svg width="16" height="16" viewBox="0 0 16 16"><path d="M0 0h15v9H11a4 4 0 0 0-5 0H0z" fill="#444" /><circle cx="10.500" cy="11" r="3" fill="none" stroke="#444" strokeWidth="2" /><path d="M1 15h5" stroke="#444" /></svg>
          <DisplayLabel>Display Settings</DisplayLabel>
        </StatusItem>
        <StatusItem $ml={31}>
          <svg width="13" height="13" viewBox="0 0 13 13"><path d="M.5.5h12v12H.5zM4.500.5v12M8.500.5v12M.5 4.500h12M.5 8.500h12" fill="none" stroke="#777" /></svg>
        </StatusItem>
        <StatusItem $ml={25}>
          <svg width="14" height="13" viewBox="0 0 14 13"><path d="M.5.500h13v12H.5z" fill="none" stroke="#777" /><path d="M3.500 3h7v7h-7zM5 5h4M5 7h4" fill="none" stroke="#777" /></svg>
        </StatusItem>
        <StatusItem $ml={24}>
          <svg width="14" height="13" viewBox="0 0 14 13"><path d="M.5.500h13v12H.5z" fill="none" stroke="#777" /><path d="M4.500.5v6h5v-6M7 .5v6" fill="none" stroke="#777" /></svg>
        </StatusItem>
        <StatusItem $ml={17}>
          <svg width="7" height="3" viewBox="0 0 7 3"><path d="M0 0h7v2.500H0z" fill="#666" /></svg>
          <ZoomTrack />
          <svg width="8" height="8" viewBox="0 0 8 8"><path d="M4 0V8M0 4H8" stroke="#666" strokeWidth="2" /></svg>
        </StatusItem>
        <ZoomPct>100%</ZoomPct>
      </StatusBar>

      <Highlight $x={565} $y={31} $w={131} $h={39} />
      <Highlight $x={410} $y={66} $w={50} $h={75} />
      <Tip>
        <TipTitle>Picture</TipTitle>
        <TipBody>Add a picture to the header or footer.</TipBody>
      </Tip>
      <Overlay width="1302" height="748" viewBox="0 0 1302 748" aria-hidden="true">
        <g stroke="#f00" strokeWidth="2" fill="#f00">
          <path d="M545 95 598 60" />
          <path d="M609 52 592 55 601 67Z" stroke="none" />
          <path d="M388 163 425 133" />
          <path d="M437 123 420 128 430 140Z" stroke="none" />
          <path d="M326 328 480 332" />
          <path d="M493 332 477 326V338Z" stroke="none" />
          <path d="M595 331H625" strokeWidth="5" />
          <path d="M568 331 597 321V340Z" stroke="none" />
        </g>
      </Overlay>
      <Bubble $x={532} $y={105}>4</Bubble>
      <Bubble $x={308} $y={329}>5</Bubble>
      <Bubble $x={375} $y={175}>6</Bubble>
    </Frame>
  );
}
